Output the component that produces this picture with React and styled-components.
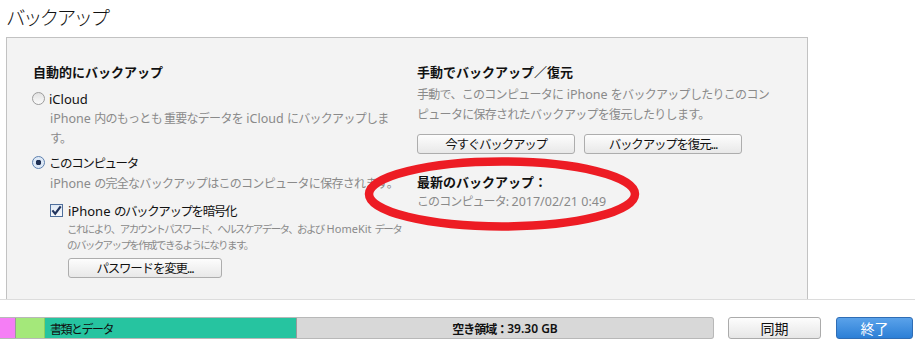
import React from "react";
import styled, { createGlobalStyle } from "styled-components";

const GlobalStyle = createGlobalStyle`
  html, body {
    margin: 0;
    padding: 0;
    background: #fff;
  }
  body {
    font-family: "Noto Sans CJK JP", "Noto Sans", sans-serif;
    color: #1a1a1a;
  }
`;

function App() {
  return (
    <>
      <GlobalStyle />
      <Page>
        <Title>バックアップ</Title>
        <Panel>
          <Column>
            <Heading>自動的にバックアップ</Heading>
            <OptionRow $top={6}>
              <Radio />
              <OptionLabel><Latin>iCloud</Latin></OptionLabel>
            </OptionRow>
            <Desc $indent={17}>
              <Latin>iPhone{" "}</Latin>内のもっとも 重要なデータを<Latin>{" "}iCloud{" "}</Latin>にバックアップしま
              <br />
              す。
            </Desc>
            <OptionRow $top={5}>
              <Radio $checked />
              <OptionLabel>このコンピュータ</OptionLabel>
            </OptionRow>
            <Desc $indent={17} $top={1}>
              <Latin>iPhone{" "}</Latin>の完全なバックアップはこのコンピュータに保存されます。
            </Desc>
            <Indented>
              <OptionRow $top={7} $gap={5}>
                <Checkbox>
                  <svg width="11" height="11" viewBox="0 0 11 11">
                    <path d="M1.4 5.4 L4.2 8.7 L9.7 1.3" fill="none" stroke="#23355e" strokeWidth="2.2" />
                  </svg>
                </Checkbox>
                <OptionLabel><Latin>iPhone{" "}</Latin>のバックアップを暗号化</OptionLabel>
              </OptionRow>
              <SmallDesc>
                これにより、アカウントパスワード、ヘルスケアデータ、および<SmallLatin>{" "}HomeKit{" "}</SmallLatin>データ
                <br />
                のバックアップを作成できるようになります。
              </SmallDesc>
              <Button $width={154} $top={5} $left={18}>パスワードを変更...</Button>
            </Indented>
          </Column>
          <Column>
            <Heading>手動でバックアップ／復元</Heading>
            <Desc $top={2}>
              手動で、このコンピュータに<Latin>{" "}iPhone{" "}</Latin>をバックアップしたりこのコン
              <br />
              ピュータに保存されたバックアップを復元したりします。
            </Desc>
            <ButtonRow>
              <Button $width={158}>今すぐバックアップ</Button>
              <Button $width={158}>バックアップを復元...</Button>
            </ButtonRow>
            <Heading $top={18}>最新のバックアップ：</Heading>
            <LatestInfo>
              このコンピュータ:<Latin>{" "}2017/02/21 0:49</Latin>
            </LatestInfo>
          </Column>
          <Marker width="290" height="90" viewBox="0 0 290 90">
            <ellipse cx="145" cy="44" rx="133" ry="32.5" fill="none" stroke="#ed1c24" strokeWidth="8.5" />
          </Marker>
        </Panel>
        <Footer>
          <StorageBar>
            <Segment $color="#f57ef5" $width={16} />
            <Segment $color="#a4e87a" $width={29} $border="#8ccf60" />
            <Segment $color="#26c4a0" $width={252}>
              <SegmentLabel>書類とデータ</SegmentLabel>
            </Segment>
            <FreeSpace>
              空き領域：<Latin>39.30 GB</Latin>
            </FreeSpace>
          </StorageBar>
          <FooterButton>同期</FooterButton>
          <FooterButton $primary>終了</FooterButton>
        </Footer>
      </Page>
    </>
  );
}

const Page = styled.div`
  display: flex;
  flex-direction: column;
  width: 915px;
  height: 346px;
  overflow: hidden;
`;

const Title = styled.div`
  height: 37px;
  padding-left: 6px;
  font-size: 19.5px;
  font-weight: 300;
  letter-spacing: -2.6px;
  line-height: 34px;
  color: #111;
`;

const Panel = styled.div`
  position: relative;
  display: flex;
  width: 802px;
  height: 262px;
  margin-left: 6px;
  box-sizing: border-box;
  padding: 24px 0 0 26px;
  background: #f3f3f3;
  border: 1px solid #c2c2c2;
  border-bottom: none;
`;

const Column = styled.div`
  display: flex;
  flex-direction: column;
  width: 384px;
  flex-shrink: 0;
`;

const Latin = styled.span`
  font-family: "Noto Sans", sans-serif;
  font-size: 12.5px;
  letter-spacing: 0;
  white-space: pre;
`;

const SmallLatin = styled.span`
  font-family: "Noto Sans", sans-serif;
  font-size: 11px;
  letter-spacing: 0;
  white-space: pre;
`;

const Heading = styled.div`
  margin-top: ${(p) => p.$top || 0}px;
  font-size: 13px;
  font-weight: 700;
  line-height: 20px;
  color: #111;
`;

const OptionRow = styled.div`
  display: flex;
  align-items: center;
  gap: ${(p) => p.$gap || 4}px;
  margin-top: ${(p) => p.$top}px;
  height: 20px;
`;

const Radio = styled.span`
  box-sizing: border-box;
  width: 13px;
  height: 13px;
  margin-left: -1px;
  border-radius: 50%;
  border: 1px solid ${(p) => (p.$checked ? "#5b7fae" : "#9c9c9c")};
  background: ${(p) =>
    p.$checked
      ? "radial-gradient(circle, #1f2f52 0 2.6px, #d9e6f5 3px, #e8eef7 100%)"
      : "linear-gradient(#e2e2e2, #fbfbfb)"};
`;

const Checkbox = styled.span`
  box-sizing: border-box;
  display: flex;
  align-items: center;
  justify-content: center;
  width: 13px;
  height: 13px;
  border: 1px solid #4f6f9c;
  background: linear-gradient(#dfe9f5, #f7f9fc);
`;

const OptionLabel = styled.span`
  font-size: 12.5px;
  letter-spacing: -1.4px;
  color: #111;
  white-space: nowrap;

  ${Latin} {
    font-size: 13px;
    color: #111;
  }
`;

const Desc = styled.div`
  margin-left: ${(p) => p.$indent || 0}px;
  margin-top: ${(p) => p.$top || 0}px;
  font-size: 12px;
  letter-spacing: -0.7px;
  line-height: 19px;
  color: #8a8a8a;
  white-space: nowrap;
`;

const Indented = styled.div`
  display: flex;
  flex-direction: column;
  align-items: flex-start;
  margin-left: 17px;
`;

const SmallDesc = styled.div`
  margin-left: 17px;
  margin-top: 1px;
  font-size: 10.5px;
  letter-spacing: -1.6px;
  line-height: 16px;
  color: #8a8a8a;
  white-space: nowrap;
`;

const Button = styled.button`
  box-sizing: border-box;
  width: ${(p) => p.$width}px;
  height: 20px;
  margin-top: ${(p) => p.$top || 0}px;
  margin-left: ${(p) => p.$left || 0}px;
  padding: 0;
  border: 1px solid #adadad;
  border-radius: 3px;
  background: linear-gradient(#fdfdfd, #e8e8e8);
  font-family: "Noto Sans CJK JP", sans-serif;
  font-size: 12.5px;
  letter-spacing: -1.2px;
  line-height: 18px;
  color: #111;
`;

const ButtonRow = styled.div`
  display: flex;
  gap: 9px;
  margin-top: 11px;
`;

const LatestInfo = styled.div`
  font-size: 12px;
  letter-spacing: -0.9px;
  line-height: 17px;
  color: #8a8a8a;
  white-space: nowrap;
`;

const Marker = styled.svg`
  position: absolute;
  left: 350px;
  top: 112px;
  pointer-events: none;
`;

const Footer = styled.div`
  display: flex;
  align-items: flex-start;
  height: 47px;
  box-sizing: border-box;
  padding-top: 17px;
  border-top: 1px solid #dcdcdc;
`;

const StorageBar = styled.div`
  display: flex;
  width: 714px;
  height: 22px;
  box-sizing: border-box;
  border: 1px solid #b8b8b8;
  border-left: none;
  border-radius: 0 3px 3px 0;
  overflow: hidden;
  background: #d8d8d8;
`;

const Segment = styled.div`
  box-sizing: border-box;
  display: flex;
  align-items: center;
  width: ${(p) => p.$width}px;
  flex-shrink: 0;
  background: ${(p) => p.$color};
  border-right: 1px solid ${(p) => p.$border || "#9a9a9a"};
`;

const SegmentLabel = styled.span`
  padding-left: 5px;
  font-size: 12px;
  letter-spacing: -1.5px;
  color: #111;
`;

const FreeSpace = styled.div`
  flex: 1;
  display: flex;
  align-items: center;
  justify-content: center;
  font-size: 12px;
  font-weight: 700;
  letter-spacing: -1px;
  color: #111;

  ${Latin} {
    font-size: 12px;
    font-weight: 600;
  }
`;

const FooterButton = styled.button`
  box-sizing: border-box;
  width: ${(p) => (p.$primary ? 77 : 93)}px;
  height: 22px;
  margin-left: ${(p) => (p.$primary ? 15 : 14)}px;
  padding: 0;
  border: 1px solid ${(p) => (p.$primary ? "#2f6db5" : "#ababab")};
  border-radius: 3px;
  background: ${(p) =>
    p.$primary ? "linear-gradient(#5aa2ea, #2c7fd6)" : "linear-gradient(#fdfdfd, #e6e6e6)"};
  font-family: "Noto Sans CJK JP", sans-serif;
  font-size: 14px;
  line-height: 20px;
  color: ${(p) => (p.$primary ? "#fff" : "#111")};
`;

export default App;
